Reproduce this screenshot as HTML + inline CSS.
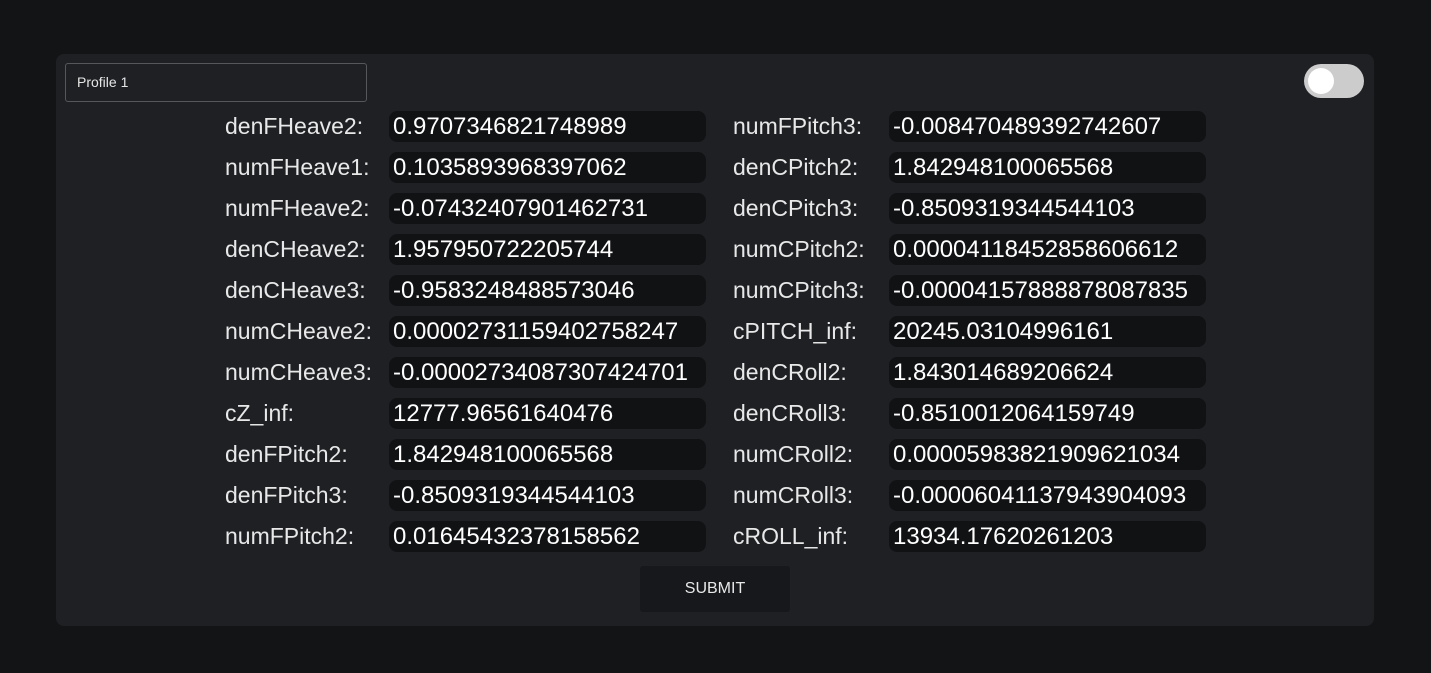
<!DOCTYPE html>
<html><head><style>
body{margin:0;background:#131416;width:1431px;height:673px;overflow:hidden;font-family:"Liberation Sans",sans-serif;}
.panel{position:absolute;left:56px;top:54px;width:1318px;height:572px;background:#1e2024;border-radius:8px;}
.prof{position:absolute;left:65px;top:63px;width:300px;height:37px;border:1px solid #55575b;border-radius:3px;color:#e6e6e6;font-size:14px;line-height:37px;box-sizing:content-box;}
.prof span{padding-left:11px;}
.tog{position:absolute;left:1304px;top:64px;width:60px;height:34px;border-radius:17px;background:#cccccc;}
.tog:after{content:"";position:absolute;left:4px;top:4px;width:26px;height:26px;border-radius:50%;background:#fff;}
.lab{position:absolute;color:#e8e8e8;font-size:23px;line-height:31px;}
.inp{position:absolute;width:317px;height:31px;background:#111214;border-radius:8px;color:#fff;font-size:24px;line-height:31px;box-sizing:border-box;padding-left:4px;white-space:nowrap;overflow:hidden;}
.btn{position:absolute;left:640px;top:566px;width:150px;height:46px;background:#16181b;border-radius:3px;color:#e8e8e8;font-size:16px;line-height:46px;text-align:center;}
</style></head><body>
<div class="panel"></div>
<div class="prof"><span>Profile 1</span></div>
<div class="tog"></div>
<div id="rows"></div>
<div class="lab" style="left:225px;top:111px">denFHeave2:</div><div class="inp" style="left:389px;top:111px">0.9707346821748989</div>
<div class="lab" style="left:225px;top:152px">numFHeave1:</div><div class="inp" style="left:389px;top:152px">0.1035893968397062</div>
<div class="lab" style="left:225px;top:193px">numFHeave2:</div><div class="inp" style="left:389px;top:193px">-0.07432407901462731</div>
<div class="lab" style="left:225px;top:234px">denCHeave2:</div><div class="inp" style="left:389px;top:234px">1.957950722205744</div>
<div class="lab" style="left:225px;top:275px">denCHeave3:</div><div class="inp" style="left:389px;top:275px">-0.9583248488573046</div>
<div class="lab" style="left:225px;top:316px">numCHeave2:</div><div class="inp" style="left:389px;top:316px">0.00002731159402758247</div>
<div class="lab" style="left:225px;top:357px">numCHeave3:</div><div class="inp" style="left:389px;top:357px">-0.00002734087307424701</div>
<div class="lab" style="left:225px;top:398px">cZ_inf:</div><div class="inp" style="left:389px;top:398px">12777.96561640476</div>
<div class="lab" style="left:225px;top:439px">denFPitch2:</div><div class="inp" style="left:389px;top:439px">1.842948100065568</div>
<div class="lab" style="left:225px;top:480px">denFPitch3:</div><div class="inp" style="left:389px;top:480px">-0.8509319344544103</div>
<div class="lab" style="left:225px;top:521px">numFPitch2:</div><div class="inp" style="left:389px;top:521px">0.01645432378158562</div>
<div class="lab" style="left:733px;top:111px">numFPitch3:</div><div class="inp" style="left:889px;top:111px">-0.008470489392742607</div>
<div class="lab" style="left:733px;top:152px">denCPitch2:</div><div class="inp" style="left:889px;top:152px">1.842948100065568</div>
<div class="lab" style="left:733px;top:193px">denCPitch3:</div><div class="inp" style="left:889px;top:193px">-0.8509319344544103</div>
<div class="lab" style="left:733px;top:234px">numCPitch2:</div><div class="inp" style="left:889px;top:234px">0.000041184528586066​12</div>
<div class="lab" style="left:733px;top:275px">numCPitch3:</div><div class="inp" style="left:889px;top:275px">-0.00004157888878087835</div>
<div class="lab" style="left:733px;top:316px">cPITCH_inf:</div><div class="inp" style="left:889px;top:316px">20245.03104996161</div>
<div class="lab" style="left:733px;top:357px">denCRoll2:</div><div class="inp" style="left:889px;top:357px">1.843014689206624</div>
<div class="lab" style="left:733px;top:398px">denCRoll3:</div><div class="inp" style="left:889px;top:398px">-0.8510012064159749</div>
<div class="lab" style="left:733px;top:439px">numCRoll2:</div><div class="inp" style="left:889px;top:439px">0.00005983821909621034</div>
<div class="lab" style="left:733px;top:480px">numCRoll3:</div><div class="inp" style="left:889px;top:480px">-0.00006041137943904093</div>
<div class="lab" style="left:733px;top:521px">cROLL_inf:</div><div class="inp" style="left:889px;top:521px">13934.17620261203</div>
<div class="btn">SUBMIT</div>
</body></html>
